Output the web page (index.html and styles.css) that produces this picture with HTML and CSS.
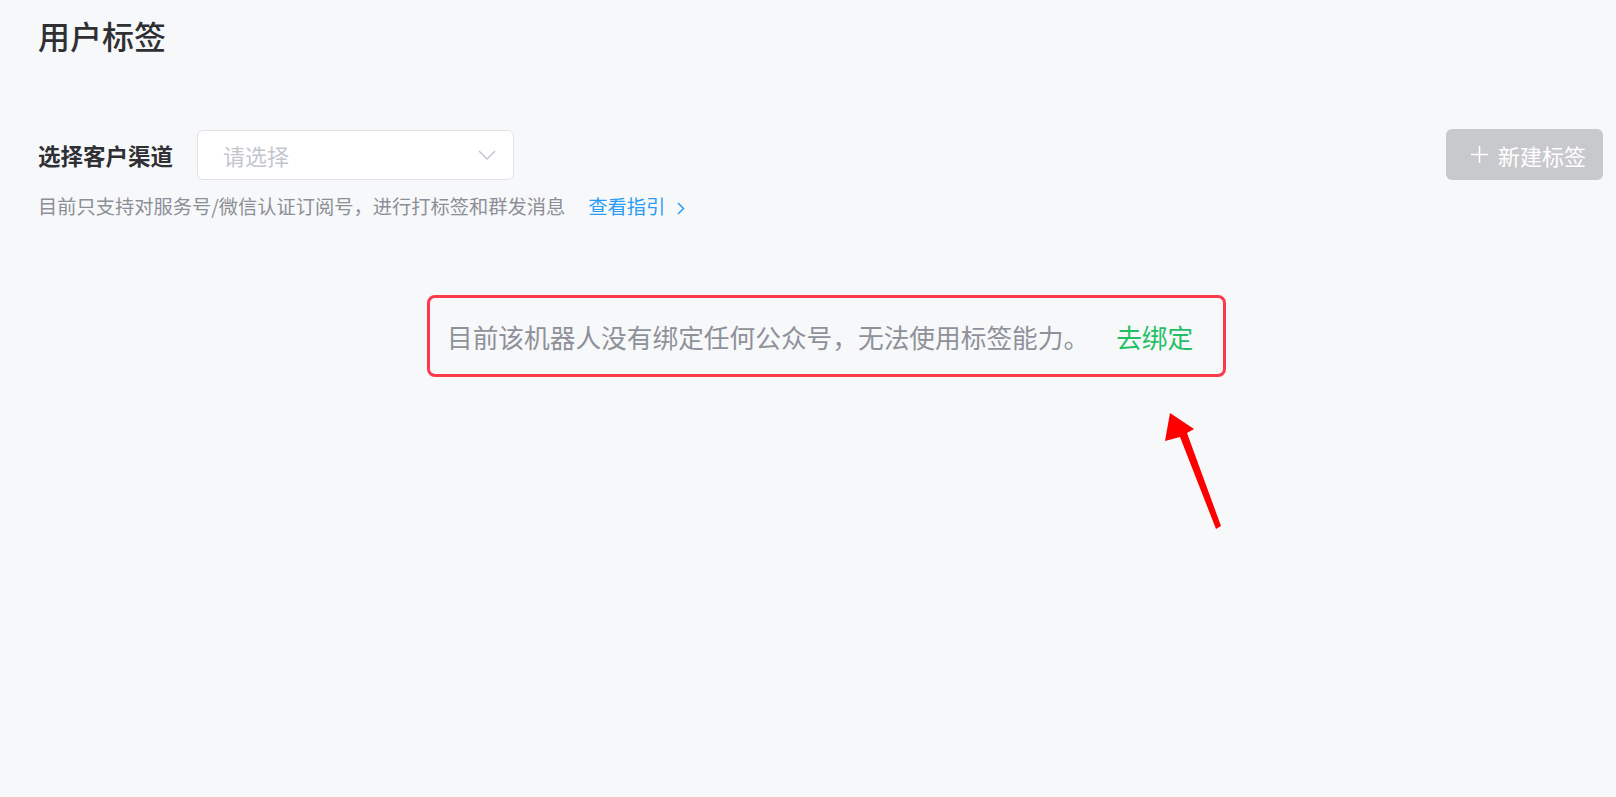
FILE: index.html
```html
<!DOCTYPE html>
<html lang="zh-CN">
<head>
<meta charset="utf-8">
<title>用户标签</title>
<link rel="stylesheet" href="styles.css">
</head>
<body>
<div class="page">
  <h1 class="title">用户标签</h1>
  <div class="toolbar">
    <span class="field-label">选择客户渠道</span>
    <div class="select">
      <span class="placeholder">请选择</span>
      <svg class="select-arrow" width="18" height="10" viewBox="0 0 18 10"><path d="M1 1 L9 9 L17 1" fill="none" stroke="#c0c4cc" stroke-width="1.4"/></svg>
    </div>
    <button class="btn-new">
      <svg class="plus" width="17" height="17" viewBox="0 0 17 17"><path d="M8.5 0 V17 M0 8.5 H17" stroke="#fff" stroke-width="1.6"/></svg>
      <span>新建标签</span>
    </button>
  </div>
  <p class="hint">目前只支持对服务号/微信认证订阅号，进行打标签和群发消息<a class="guide" href="#">查看指引<svg class="guide-arrow" width="8" height="13" viewBox="0 0 8 13"><path d="M1 1 L6.5 6.5 L1 12" fill="none" stroke="#2b9cf3" stroke-width="1.5"/></svg></a></p>
  <div class="empty-wrap">
    <div class="empty-box">
      <span class="empty-text">目前该机器人没有绑定任何公众号，无法使用标签能力。</span>
      <a class="bind" href="#">去绑定</a>
    </div>
  </div>
</div>
<svg class="annot-arrow" width="80" height="130" viewBox="0 0 80 130">
  <path d="M5 4 L29 20 L22 24 L56 117 L51 120 L15 28 L0 32 Z" fill="#ff0000"/>
</svg>
</body>
</html>
```
FILE: styles.css
```css
* { box-sizing: border-box; }
html, body { margin: 0; padding: 0; }
body {
  background: #f7f8fa;
  font-family: "Noto Sans CJK SC", "Noto Sans", sans-serif;
  width: 1616px;
  height: 797px;
  overflow: hidden;
  position: relative;
}
.page {
  padding: 0 13px 0 38px;
}
.title {
  margin: 15px 0 0;
  font-size: 32px;
  line-height: 40px;
  font-weight: 500;
  color: #2f3033;
}
.toolbar {
  margin-top: 74px;
  display: flex;
  align-items: center;
  height: 51px;
}
.field-label {
  font-size: 22.5px;
  font-weight: 700;
  color: #2f3033;
  line-height: 30px;
}
.select {
  margin-left: 24px;
  width: 317px;
  height: 50px;
  background: #fff;
  border: 1px solid #dfe1e6;
  border-radius: 6px;
  display: flex;
  align-items: center;
  justify-content: space-between;
  padding: 0 17px 0 25px;
}
.placeholder {
  font-size: 22px;
  color: #c3c6cc;
}
.btn-new {
  margin-left: auto;
  width: 157px;
  height: 51px;
  border: none;
  border-radius: 6px;
  background: #c8c9cc;
  color: #fff;
  font-family: inherit;
  font-size: 22px;
  display: flex;
  align-items: center;
  justify-content: center;
  gap: 10px;
  padding: 0 12px 0 20px;
}
.plus { flex: none; }
.hint {
  margin: 13px 0 0;
  font-size: 19.25px;
  line-height: 26px;
  color: #8c8f96;
}
.guide {
  margin-left: 23px;
  color: #2b9cf3;
  text-decoration: none;
}
.guide-arrow {
  margin-left: 12px;
  vertical-align: -1px;
}
.empty-wrap {
  margin-top: 76px;
  display: flex;
  justify-content: center;
  padding-left: 12px;
}
.empty-box {
  width: 799px;
  height: 82px;
  border: 3px solid #fc3a4b;
  border-radius: 8px;
  display: flex;
  align-items: center;
  padding: 0 17px;
  font-size: 25.7px;
}
.empty-text {
  color: #8e9199;
}
.bind {
  margin-left: 27px;
  color: #22c064;
  text-decoration: none;
}
.annot-arrow {
  position: absolute;
  left: 1165px;
  top: 409px;
}
```
